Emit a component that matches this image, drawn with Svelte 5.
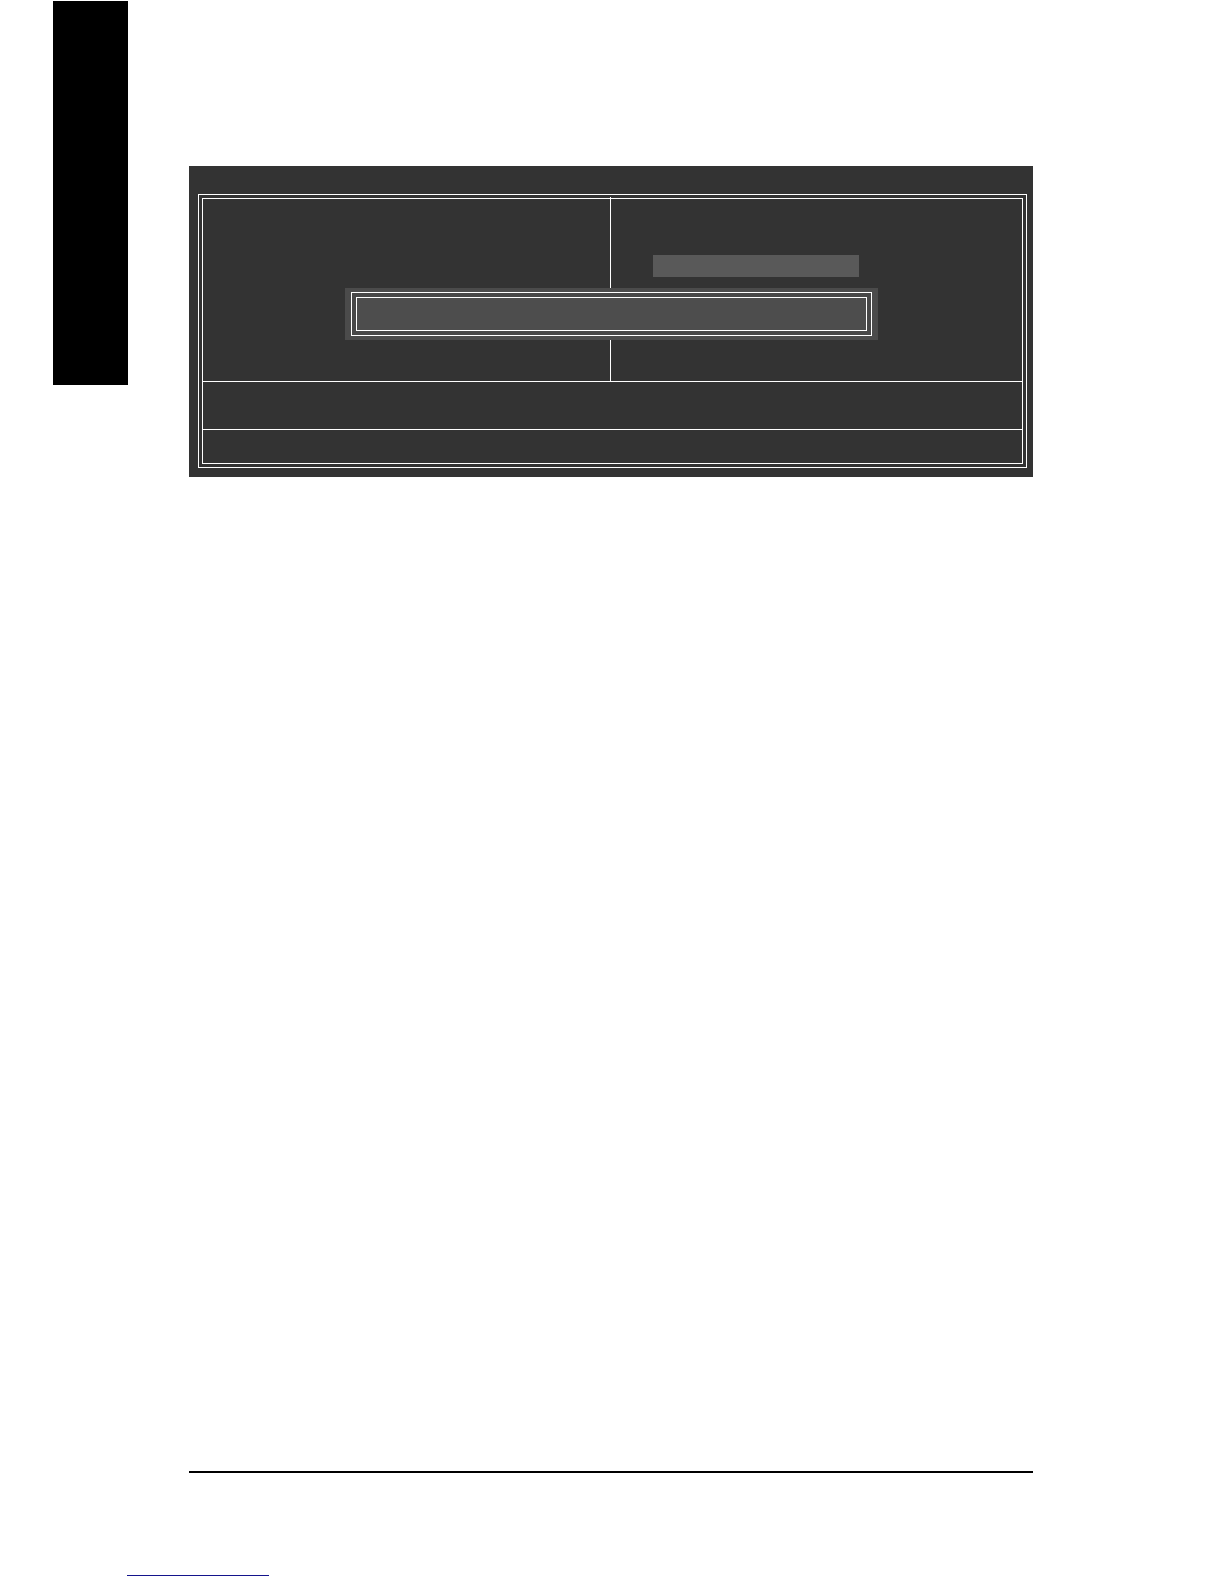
<script lang="ts">
  // Rows of the setup screen below the two menu columns
  const helpRows = ['keys', 'hint'];
</script>

<div class="page">
  <div class="sheet">
    <aside class="chapter-tab"></aside>

    <main class="content">
      <section class="bios">
        <div class="frame">
          <div class="frame-inner">
            <div class="menu">
              <div class="column"></div>
              <div class="column split">
                <div class="selected"></div>
              </div>
            </div>
            {#each helpRows as row (row)}
              <div class="help {row}"></div>
            {/each}
          </div>
        </div>

        <div class="dialog">
          <div class="dialog-frame">
            <div class="dialog-inner"></div>
          </div>
        </div>
      </section>

      <div class="blank"></div>
      <hr class="rule" />
    </main>
  </div>

  <footer class="footer">
    <a class="source" href="#top" aria-label="Back to top"></a>
  </footer>
</div>

<style>
  :global(body) {
    background: #fff;
  }

  .page {
    font-family: "Liberation Sans", Arial, sans-serif;
  }

  .sheet {
    display: flex;
    align-items: flex-start;
    gap: 61px;
    padding: 1px 191px 0 53px;
  }

  .chapter-tab {
    flex: none;
    width: 75px;
    height: 384px;
    background: #000;
  }

  .content {
    flex: 1;
    min-width: 0;
    padding-top: 165px;
  }

  .bios {
    position: relative;
    padding: 28px 6px 9px 9px;
    background: #333;
  }

  .frame {
    padding: 3px;
    border: 1px solid #fff;
  }

  .frame-inner {
    border: 1px solid #fff;
  }

  .menu {
    display: grid;
    grid-template-columns: 407fr 412fr;
    min-height: 182px;
  }

  /* the divider runs up into the gap between the two frames */
  .split {
    margin-top: -2px;
    padding: 58px 0 0 42px;
    border-left: 1px solid #fff;
  }

  .selected {
    width: 206px;
    height: 22px;
    background: #595959;
  }

  .help {
    border-top: 1px solid #fff;
  }

  .keys {
    min-height: 47px;
  }

  .hint {
    min-height: 33px;
  }

  .dialog {
    position: absolute;
    top: 122px;
    left: 156px;
    right: 155px;
    padding: 4px 6px;
    background: #4b4b4b;
  }

  .dialog-frame {
    padding: 4px;
    border: 1px solid #fff;
    background: #484848;
  }

  .dialog-inner {
    min-height: 32px;
    border: 1px solid #fff;
    background: #4d4d4d;
  }

  .blank {
    height: 994px;
  }

  .rule {
    height: 2px;
    margin: 0;
    border: none;
    background: #000;
  }

  .footer {
    padding: 86px 0 8px 127px;
  }

  .source {
    display: block;
    width: 142px;
    height: 16px;
    border-bottom: 1px solid #14148c;
  }
</style>
